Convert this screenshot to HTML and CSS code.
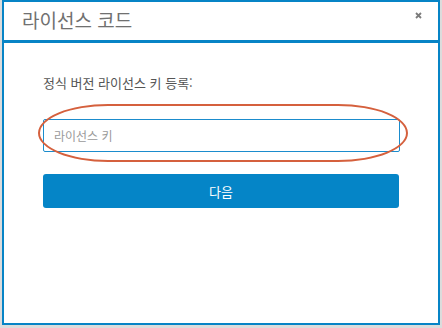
FILE: index.html
```html
<!DOCTYPE html>
<html lang="ko">
  <head>
    <meta charset="utf-8" />
    <meta name="viewport" content="width=device-width, initial-scale=1" />
    <title>라이선스 코드</title>
    <link rel="stylesheet" href="styles.css">
  </head>
  <body>
    <div class="dialog">
      <div class="dialog-header">
        <h1>라이선스 코드</h1>
        <svg class="close" width="7" height="7" viewBox="0 0 7 7">
          <path d="M1 1L6 6M6 1L1 6" stroke="#7b7b7b" stroke-width="1.8" />
        </svg>
      </div>

      <div class="dialog-body">
        <label for="license">정식 버전 라이선스 키 등록:</label>
        <div class="field">
          <input type="text" id="license" placeholder="라이선스 키" />
          <div class="mark"></div>
        </div>
        <button type="button">다음</button>
      </div>
    </div>
  </body>
</html>
```

FILE: styles.css
```css
body {
  margin: 0;
  height: 328px;
  background: #dcdcdc;
  font-family: "Noto Sans CJK KR", "Noto Sans", sans-serif;
  overflow: hidden;
}
.dialog {
  margin-left: 2px;
  width: 434px;
  height: 321px;
  background: #fff;
  border: 2px solid #0784c6;
}
.dialog-header {
  display: flex;
  justify-content: space-between;
  height: 38px;
  border-bottom: 3px solid #0784c6;
}
.dialog-header h1 {
  margin: 0;
  padding: 5px 0 0 18px;
  font-size: 19px;
  font-weight: normal;
  color: #707070;
  line-height: 26px;
}
.close {
  margin: 10px 16px 0 0;
}
.dialog-body {
  padding: 31px 38px 0 39px;
}
label {
  display: block;
  font-size: 13px;
  color: #555;
  line-height: 18px;
}
.field {
  position: relative;
  margin-top: 27px;
}
input {
  display: block;
  box-sizing: border-box;
  width: 357px;
  height: 33px;
  padding: 0 10px;
  border: 1px solid #1b8ccd;
  border-radius: 2px;
  outline: none;
  font-family: inherit;
  font-size: 12px;
  color: #333;
}
input::placeholder {
  color: #9a9a9a;
}
.mark {
  position: absolute;
  left: -5px;
  top: -15px;
  width: 366px;
  height: 54px;
  border: 2px solid #d5603d;
  border-radius: 70px / 50%;
  pointer-events: none;
}
button {
  display: block;
  width: 356px;
  height: 34px;
  margin-top: 22px;
  background: #0585c7;
  color: #fff;
  border: none;
  border-radius: 3px;
  font-family: inherit;
  font-size: 13px;
}
```
